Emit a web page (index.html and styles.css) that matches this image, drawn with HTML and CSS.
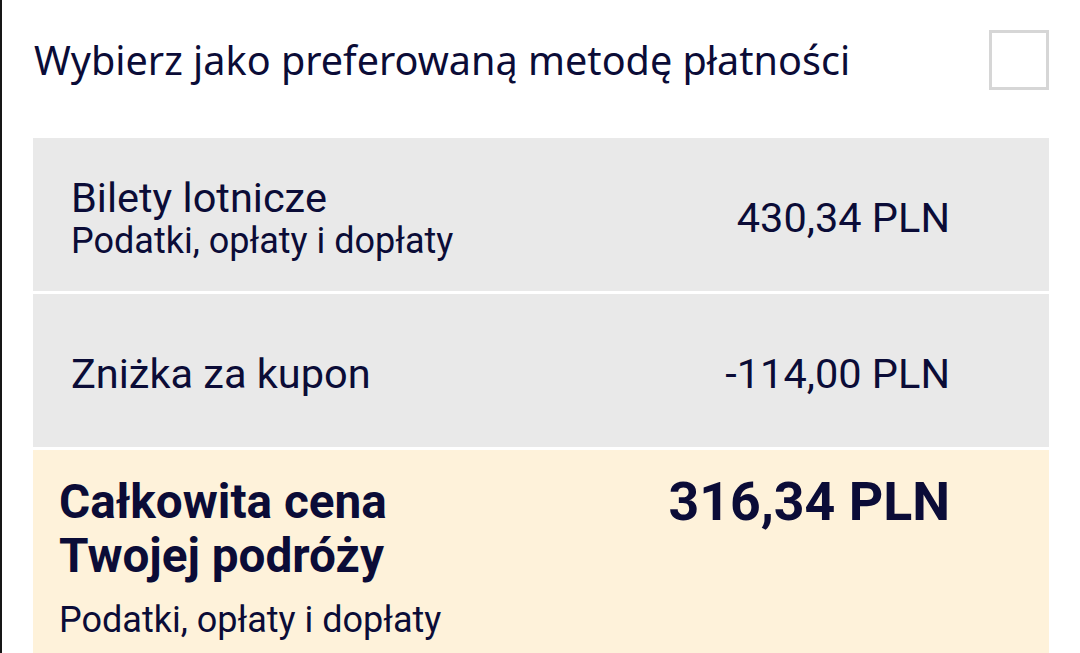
FILE: index.html
```html
<!DOCTYPE html>
<html lang="pl">
  <head>
    <meta charset="UTF-8" />
    <meta name="viewport" content="width=device-width, initial-scale=1.0" />
    <title>Podsumowanie płatności</title>
    <link rel="stylesheet" href="styles.css">
  </head>
  <body>
    <div class="page">
      <label class="preferred">
        <span class="preferred-text">Wybierz jako preferowaną metodę płatności</span>
        <span class="checkbox"></span>
      </label>

      <div class="summary">
        <div class="row">
          <div class="row-label">
            <div class="row-title">Bilety lotnicze</div>
            <div class="row-sub">Podatki, opłaty i dopłaty</div>
          </div>
          <div class="row-price">430,34 PLN</div>
        </div>

        <div class="row">
          <div class="row-label">
            <div class="row-title">Zniżka za kupon</div>
          </div>
          <div class="row-price">-114,00 PLN</div>
        </div>

        <div class="total">
          <div class="total-label">
            <div class="total-title">Całkowita cena Twojej podróży</div>
            <div class="total-sub">Podatki, opłaty i dopłaty</div>
          </div>
          <div class="total-price">316,34 PLN</div>
        </div>
      </div>
    </div>
  </body>
</html>
```

FILE: styles.css
```css
body {
  margin: 0;
  background: #fff;
  color: #0b0c37;
  font-family: Roboto, "Liberation Sans", sans-serif;
  border-left: 2px solid #161616;
  height: 653px;
  box-sizing: border-box;
  overflow: hidden;
}
.page {
  padding: 30px 31px 0 31px;
}
.preferred {
  display: flex;
  justify-content: space-between;
  align-items: center;
  padding-left: 1px;
}
.preferred-text {
  font-family: "Noto Sans", "Open Sans", sans-serif;
  font-size: 39.6px;
  line-height: 60px;
}
.checkbox {
  width: 60px;
  height: 60px;
  box-sizing: border-box;
  border: 3px solid #d6d6d6;
  background: #fff;
}
.summary {
  margin-top: 48px;
  display: flex;
  flex-direction: column;
  gap: 3px;
}
.row {
  background: #e9e9e9;
  height: 153px;
  box-sizing: border-box;
  padding: 6px 99px 0 38px;
  display: flex;
  justify-content: space-between;
  align-items: center;
  font-size: 41.5px;
}
.row-title {
  line-height: 46px;
}
.row-sub {
  font-size: 36px;
  line-height: 40px;
}
.row-price {
  line-height: 48px;
}
.total {
  background: #fef2da;
  padding: 25px 99px 30px 26px;
  display: grid;
  grid-template-columns: 1fr 1fr;
  align-items: start;
}
.total-title {
  font-size: 47.7px;
  font-weight: 700;
  line-height: 54px;
}
.total-sub {
  font-size: 36px;
  line-height: 42px;
  margin-top: 16px;
}
.total-price {
  font-size: 53.6px;
  font-weight: 700;
  line-height: 54px;
  text-align: right;
}
```
